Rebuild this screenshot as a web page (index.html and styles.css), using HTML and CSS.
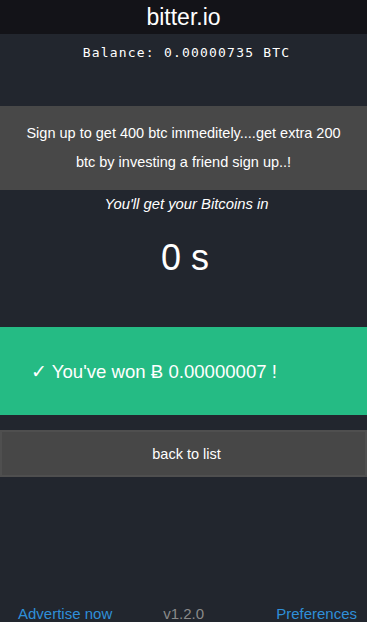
FILE: index.html
```html
<!DOCTYPE html>
<html>
<head>
<meta charset="utf-8">
<link rel="stylesheet" href="styles.css">
</head>
<body>
<div class="page">
  <header class="top">bitter.io</header>
  <div class="balance">Balance: 0.00000735 BTC</div>
  <div class="promo">Sign up to get 400 btc immeditely....get extra 200 btc by investing a friend sign up..!</div>
  <div class="wait">You'll get your Bitcoins in</div>
  <div class="counter">0 s</div>
  <div class="won">✓ You've won Ƀ 0.00000007 !</div>
  <div class="back">back to list</div>
  <footer class="foot">
    <a class="link">Advertise now</a>
    <span class="ver">v1.2.0</span>
    <a class="link right">Preferences</a>
  </footer>
</div>
</body>
</html>
```
FILE: styles.css
```css
html, body {
  margin: 0;
  padding: 0;
  background: #22262e;
}
.page {
  display: flex;
  flex-direction: column;
  height: 622px;
  overflow: hidden;
  font-family: "Liberation Sans", Arial, sans-serif;
  color: #fff;
}
.top {
  height: 34px;
  line-height: 34px;
  background: #131318;
  text-align: center;
  font-size: 23px;
}
.balance {
  height: 72px;
  box-sizing: border-box;
  padding-top: 11px;
  padding-left: 6px;
  line-height: 16px;
  text-align: center;
  font-family: "DejaVu Sans Mono", monospace;
  font-size: 13px;
  letter-spacing: 1.2px;
}
.promo {
  height: 84px;
  box-sizing: border-box;
  padding: 13px 16px;
  background: #484848;
  text-align: center;
  font-size: 14.5px;
  line-height: 29px;
}
.wait {
  padding-top: 4px;
  padding-left: 6px;
  line-height: 20px;
  text-align: center;
  font-style: italic;
  font-size: 14.8px;
}
.counter {
  margin-top: 22px;
  padding-left: 3px;
  line-height: 44px;
  text-align: center;
  font-size: 36px;
}
.won {
  margin-top: 47px;
  height: 88px;
  line-height: 89px;
  padding-left: 31px;
  background: #25bb84;
  font-size: 18.6px;
}
.back {
  margin-top: 15px;
  height: 47px;
  box-sizing: border-box;
  line-height: 44px;
  padding-left: 6px;
  border: 2px solid #4f4f4f;
  background: #474747;
  text-align: center;
  font-size: 14.5px;
}
.foot {
  margin-top: auto;
  margin-bottom: -1px;
  display: flex;
  align-items: center;
  height: 18px;
  line-height: 18px;
  padding: 0 10px 0 18px;
  font-size: 15px;
}
.link {
  color: #2f8fd9;
}
.ver {
  margin-left: 51px;
  color: #8a8a8a;
}
.right {
  margin-left: auto;
}
```
